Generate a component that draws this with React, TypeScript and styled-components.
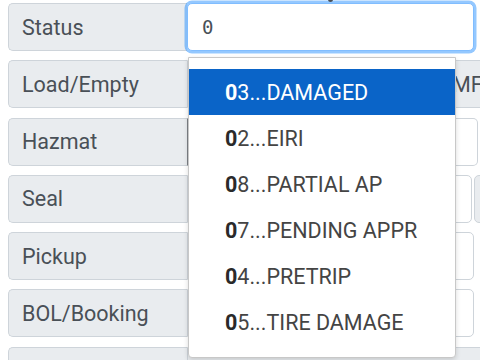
import React from "react";
import styled, { createGlobalStyle } from "styled-components";

const Global = createGlobalStyle`
  html, body { margin: 0; padding: 0; background: #ffffff; }
  body { font-family: Roboto, "Liberation Sans", sans-serif; overflow: hidden; }
`;

const Page = styled.div`
  position: relative;
  width: 480px;
  height: 360px;
  overflow: hidden;
  background: #ffffff;
`;

const Form = styled.div`
  display: flex;
  flex-direction: column;
  gap: 9.3px;
  padding: 3px 6px 0 8px;
`;

const Row = styled.div`
  display: flex;
  height: 48px;
  flex-shrink: 0;
`;

const Label = styled.div`
  width: 179px;
  flex-shrink: 0;
  box-sizing: border-box;
  display: flex;
  align-items: center;
  padding-left: 13px;
  background: #e9ecef;
  border: 1px solid #ced4da;
  border-right: none;
  border-radius: 5px 0 0 5px;
  color: #495057;
  font-size: 21.5px;
  white-space: nowrap;
`;

const Control = styled.div<{ $gray?: boolean; $focus?: boolean; $extend?: number; $dark?: boolean }>`
  flex: 1;
  box-sizing: border-box;
  display: flex;
  align-items: center;
  margin-right: ${(p) => (p.$extend ? -p.$extend : 0)}px;
  background: ${(p) => (p.$gray ? "#e9ecef" : "#ffffff")};
  border: 1px solid ${(p) => (p.$focus ? "#80bdff" : "#ced4da")};
  border-left-color: ${(p) => (p.$dark ? "#7d8287" : p.$focus ? "#80bdff" : "#ced4da")};
  border-radius: ${(p) => (p.$focus ? "5px" : "0 5px 5px 0")};
  box-shadow: ${(p) => (p.$focus ? "0 0 0 2.5px rgba(0, 123, 255, 0.42)" : "none")};
  color: #495057;
  font-size: 21.5px;
  white-space: nowrap;
  overflow: hidden;
  position: relative;
  z-index: ${(p) => (p.$focus ? 2 : 0)};
`;

const InputText = styled.span`
  font-family: "DejaVu Sans Mono", "Liberation Mono", monospace;
  font-size: 19px;
  padding-left: 14px;
  color: #495057;
`;

const HiddenValue = styled.span<{ $indent: number }>`
  padding-left: ${(p) => p.$indent}px;
`;

const FixedControl = styled(Control)`
  flex: 0 0 285px;
`;

const Addon = styled.div`
  flex: 0 0 40px;
  margin-left: 2px;
  margin-right: -40px;
  box-sizing: border-box;
  background: #e9ecef;
  border: 1px solid #ced4da;
  border-radius: 5px 0 0 5px;
`;

const Caret = styled.div`
  position: absolute;
  left: 328px;
  top: -3px;
  width: 5px;
  height: 5px;
  border-radius: 50%;
  background: #4a4f55;
  z-index: 3;
`;

const Menu = styled.ul`
  position: absolute;
  left: 188px;
  top: 57px;
  width: 268px;
  height: 301px;
  box-sizing: border-box;
  margin: 0;
  padding: 11px 0 0 0;
  list-style: none;
  background: #ffffff;
  border: 1px solid #c8c8c8;
  border-radius: 0 0 4px 4px;
  box-shadow: 0 2px 5px rgba(0, 0, 0, 0.15);
  z-index: 5;
`;

const Item = styled.li<{ $active?: boolean }>`
  height: 46px;
  display: flex;
  align-items: center;
  padding-left: 36px;
  font-size: 21.5px;
  color: ${(p) => (p.$active ? "#ffffff" : "#444444")};
  background: ${(p) => (p.$active ? "#0a64c8" : "transparent")};
  white-space: nowrap;
  b {
    font-weight: 700;
    color: ${(p) => (p.$active ? "#ffffff" : "#2a2a2a")};
  }
`;

const options = [
  { code: "3", name: "DAMAGED" },
  { code: "2", name: "EIRI" },
  { code: "8", name: "PARTIAL AP" },
  { code: "7", name: "PENDING APPR" },
  { code: "4", name: "PRETRIP" },
  { code: "5", name: "TIRE DAMAGE" },
];

export default function App() {
  return (
    <Page>
      <Global />
      <Caret />
      <Form>
        <Row>
          <Label>Status</Label>
          <Control $focus>
            <InputText>0</InputText>
          </Control>
        </Row>
        <Row>
          <Label>Load/Empty</Label>
          <Control $gray $extend={40}>
            <HiddenValue $indent={264}>MFG</HiddenValue>
          </Control>
        </Row>
        <Row>
          <Label>Hazmat</Label>
          <Control $dark $extend={4} />
        </Row>
        <Row>
          <Label>Seal</Label>
          <FixedControl />
          <Addon />
        </Row>
        <Row>
          <Label>Pickup</Label>
          <Control />
        </Row>
        <Row>
          <Label>BOL/Booking</Label>
          <Control />
        </Row>
        <Row>
          <Label />
          <Control $gray $extend={40} />
        </Row>
      </Form>
      <Menu>
        {options.map((o, i) => (
          <Item key={o.code} $active={i === 0}>
            <b>0</b>
            {o.code}...{o.name}
          </Item>
        ))}
      </Menu>
    </Page>
  );
}
